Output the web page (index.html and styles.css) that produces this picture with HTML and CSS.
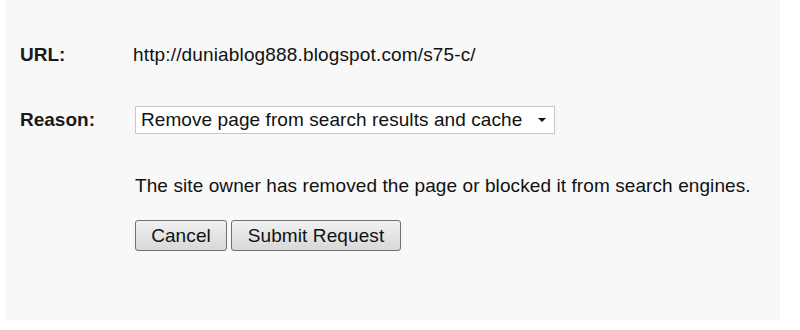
FILE: index.html
```html
<!DOCTYPE html>
<html>
<head>
<meta charset="utf-8">
<link rel="stylesheet" href="styles.css">
</head>
<body>
<div class="panel">
  <div class="row url-row">
    <div class="label">URL:</div>
    <div class="value url">http://duniablog888.blogspot.com/s75-c/</div>
  </div>
  <div class="row reason-row">
    <div class="label">Reason:</div>
    <div class="value">
      <div class="select">
        <span>Remove page from search results and cache</span>
        <svg class="caret" width="10" height="6" viewBox="0 0 10 6"><path d="M1 1 L9 1 L5 5 Z" fill="#111"/></svg>
      </div>
    </div>
  </div>
  <div class="desc">The site owner has removed the page or blocked it from search engines.</div>
  <div class="buttons">
    <button class="btn cancel">Cancel</button>
    <button class="btn submit">Submit Request</button>
  </div>
</div>
</body>
</html>
```

FILE: styles.css
```css
html, body {
  margin: 0;
  padding: 0;
  background: #ffffff;
  width: 800px;
  height: 330px;
  overflow: hidden;
}
body {
  font-family: "Liberation Sans", Arial, sans-serif;
  color: #111;
  font-size: 19px;
  line-height: 22px;
  letter-spacing: 0.15px;
}
.panel {
  margin-left: 5px;
  width: 775px;
  height: 320px;
  background: #f8f8f8;
  padding-top: 44px;
  box-sizing: border-box;
}
.row {
  display: flex;
  align-items: center;
}
.label {
  width: 113px;
  padding-left: 15px;
  font-weight: bold;
  color: #1a1a1a;
  letter-spacing: 0;
}
.reason-row {
  margin-top: 40px;
}
.select {
  margin-left: 2px;
  width: 420px;
  height: 28px;
  box-sizing: border-box;
  border: 1px solid #c8c8c8;
  background: #fff;
  display: flex;
  align-items: center;
  justify-content: space-between;
  padding: 0 7px 0 5px;
  letter-spacing: 0.08px;
}
.caret { display: block; }
.desc {
  margin-left: 130px;
  margin-top: 41px;
  letter-spacing: 0.09px;
}
.buttons {
  margin-left: 130px;
  margin-top: 23px;
  display: flex;
  gap: 4px;
}
.btn {
  font-family: "Liberation Sans", Arial, sans-serif;
  font-size: 19px;
  letter-spacing: 0.1px;
  color: #111;
  height: 31px;
  border: 1px solid #707070;
  border-radius: 3px;
  background: linear-gradient(#f2f2f2, #e4e4e4 50%, #d8d8d8);
  padding: 0;
}
.cancel { width: 92px; }
.submit { width: 170px; }
```
